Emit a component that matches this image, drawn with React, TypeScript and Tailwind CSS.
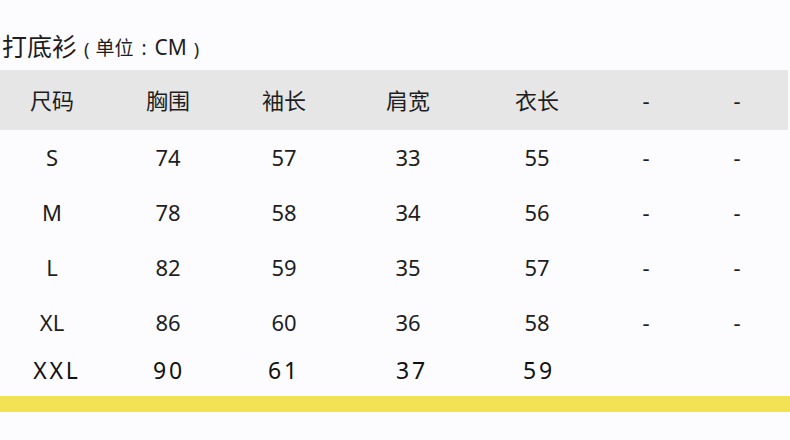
const cols = 'grid grid-cols-[104px_128px_104px_144px_114px_104px_78px] items-center text-center';

const headers = ['尺码', '胸围', '袖长', '肩宽', '衣长', '-', '-'];

const rows = [
  ['S', '74', '57', '33', '55', '-', '-'],
  ['M', '78', '58', '34', '56', '-', '-'],
  ['L', '82', '59', '35', '57', '-', '-'],
  ['XL', '86', '60', '36', '58', '-', '-'],
];

export default function App() {
  return (
    <div
      className="w-[790px] h-[440px] bg-[#fcfcfe] text-[#1e1e1e] overflow-hidden"
      style={{ fontFamily: '"Noto Sans", "Noto Sans CJK SC", sans-serif' }}
    >
      <div className="h-[70px] flex items-end pb-[11px] pl-[2px]">
        <span className="text-[25px] leading-none">打底衫</span>
        <span className="flex items-end leading-none mb-[1px] ml-[7px]">
          <span className="text-[18px]">(</span>
          <span className="text-[19px] ml-[6px]">单位</span>
          <span className="text-[19px] ml-[8px]">:</span>
          <span className="text-[21px] ml-[8px]">CM</span>
          <span className="text-[18px] ml-[7px]">)</span>
        </span>
      </div>

      <div className={`${cols} h-[60px] w-[788px] bg-[#e6e6e6] text-[22px]`}>
        {headers.map((h, i) => (
          <div key={i}>{h}</div>
        ))}
      </div>

      {rows.map((r) => (
        <div key={r[0]} className={`${cols} h-[55px] text-[22px]`}>
          {r.map((c, i) => (
            <div key={i}>{c}</div>
          ))}
        </div>
      ))}

      <div className={`${cols} h-[46px] text-[23px] text-[#111] tracking-[0.12em] pb-[6px]`}>
        <div className="pl-[10px]">XXL</div>
        <div className="pl-[2px]">90</div>
        <div>61</div>
        <div className="pl-[8px]">37</div>
        <div className="pl-[4px]">59</div>
        <div></div>
        <div></div>
      </div>

      <div className="h-[16px] w-full bg-[#f1e354]" />
    </div>
  );
}
